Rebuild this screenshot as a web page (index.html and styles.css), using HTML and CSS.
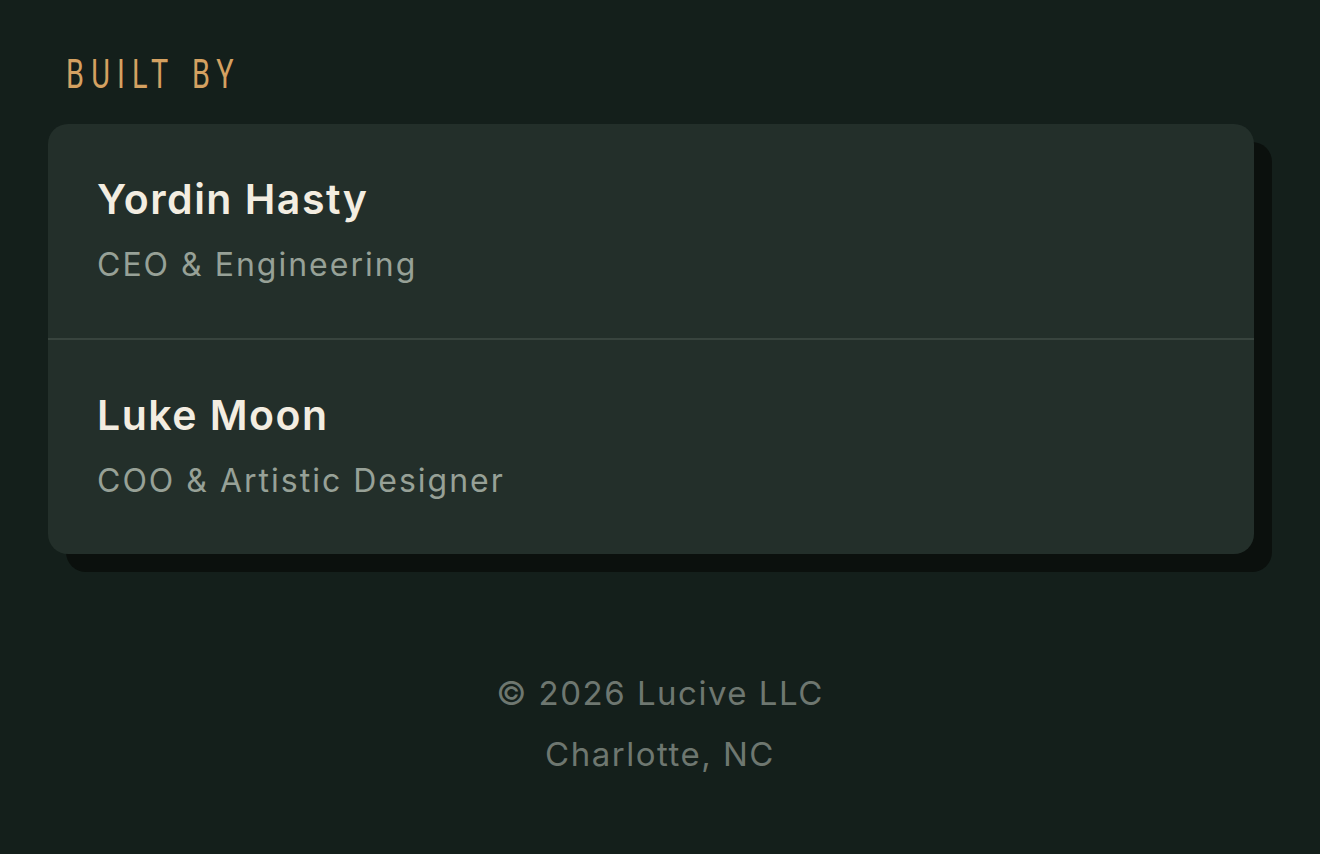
FILE: index.html
```html
<!DOCTYPE html>
<html lang="en">
<head>
    <meta charset="UTF-8">
    <meta name="viewport" content="width=device-width, initial-scale=1.0">
    <title>Built By</title>
    <link rel="stylesheet" href="styles.css">
</head>
<body>
    <section class="team">
        <h2 class="label">BUILT BY</h2>

        <div class="card">
            <div class="person">
                <h3>Yordin Hasty</h3>
                <p>CEO &amp; Engineering</p>
            </div>
            <div class="person">
                <h3>Luke Moon</h3>
                <p>COO &amp; Artistic Designer</p>
            </div>
        </div>
    </section>

    <footer class="footer">
        <p>&copy; 2026 Lucive LLC</p>
        <p>Charlotte, NC</p>
    </footer>
</body>
</html>
```

FILE: styles.css
```css
body {
    margin: 0;
    background-color: #141f1b;
    font-family: Inter, "Noto Sans", sans-serif;
    height: 854px;
    overflow: hidden;
}
.team {
    padding: 51px 66px 0 48px;
}
.label {
    margin: 0 0 25px 18px;
    height: 48px;
    font-family: Roboto, sans-serif;
    font-weight: 400;
    font-size: 40px;
    line-height: 48px;
    letter-spacing: 10px;
    word-spacing: 4px;
    color: #d4a161;
    transform: scaleX(0.72);
    transform-origin: left center;
    white-space: nowrap;
}
.card {
    background: #232f2a;
    border-radius: 20px;
    box-shadow: 18px 18px 0 #0b100d;
}
.person {
    padding: 51px 49px 54px;
}
.person + .person {
    border-top: 2px solid #38443e;
}
.person h3 {
    margin: 0;
    font-size: 41px;
    font-weight: 600;
    line-height: 49px;
    letter-spacing: 1.5px;
    color: #f3ede1;
}
.person p {
    margin: 22px 0 0;
    font-size: 32px;
    line-height: 38px;
    letter-spacing: 2px;
    color: #97a197;
}
.footer {
    margin-top: 109px;
    text-align: center;
    font-size: 33px;
    line-height: 61px;
    letter-spacing: 1.5px;
    color: #6e7770;
}
.footer p {
    margin: 0;
}
```
